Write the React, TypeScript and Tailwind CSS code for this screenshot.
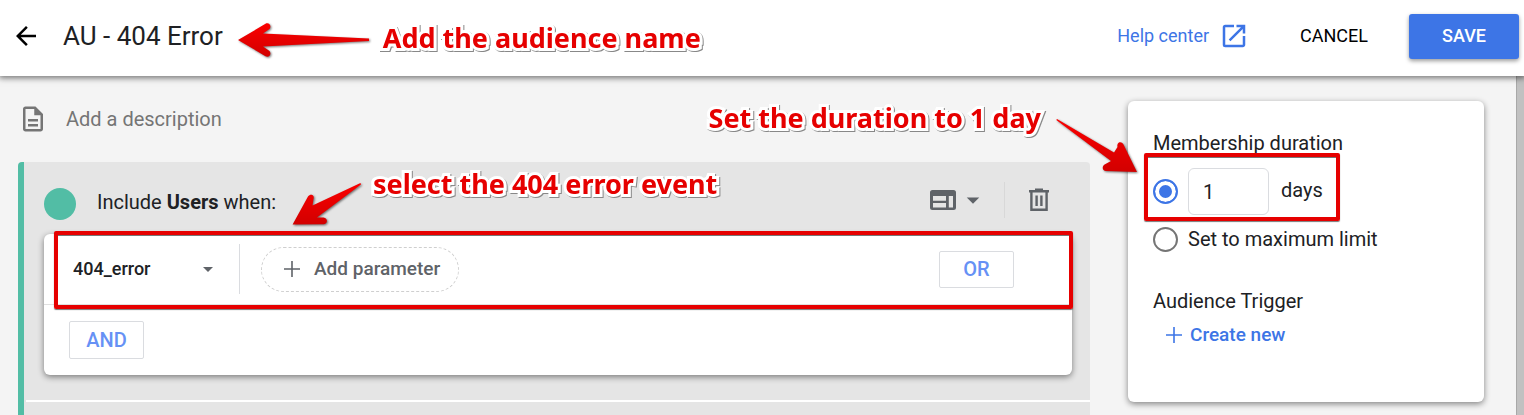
import { useState } from "react";
import type { ReactNode } from "react";
import { MdArrowBack, MdArrowDropDown, MdOpenInNew, MdOutlineDescription } from "react-icons/md";

type CalloutProps = {
    children: ReactNode,
    className?: string
}

type ArrowProps = {
    id: string,
    width: number,
    height: number,
    d: string,
    className?: string
}

const Callout = ({ children, className = "" }: CalloutProps) => (
    <span className={`whitespace-nowrap font-['Noto_Sans','Open_Sans',sans-serif] text-[27px] leading-9 font-bold text-[#e60000] [-webkit-text-stroke:6px_white] [paint-order:stroke_fill] drop-shadow-[1px_1px_0px_#888888] ${className}`}>
        {children}
    </span>
);

const Arrow = ({ id, width, height, d, className = "" }: ArrowProps) => (
    <svg width={width} height={height} viewBox={`0 0 ${width} ${height}`} className={`shrink-0 overflow-visible drop-shadow-[1px_1px_1px_#00000088] ${className}`} aria-hidden="true">
        <defs>
            <linearGradient id={id} x1="0" y1="0" x2="0" y2="1">
                <stop offset="0" stopColor="#fb0000" />
                <stop offset="1" stopColor="#d20000" />
            </linearGradient>
        </defs>
        <path d={d} fill={`url(#${id})`} />
    </svg>
);

const PlusIcon = () => (
    <svg width="16" height="16" viewBox="0 0 16 16" stroke="currentColor" strokeWidth="1.6" aria-hidden="true">
        <path d="M8 0V16M0 8H16" />
    </svg>
);

const ScopeIcon = () => (
    <svg width="26" height="20" viewBox="0 0 26 20" aria-hidden="true">
        <path fill="currentColor" fillRule="evenodd" d="M2.500 0H23.500A2.500 2.500 0 0 1 26 2.500V17.500A2.500 2.500 0 0 1 23.500 20H2.500A2.500 2.500 0 0 1 0 17.500V2.500A2.500 2.500 0 0 1 2.500 0ZM3 6V10.700H16V6ZM3 13V17.500H16V13ZM18.800 6V17.500H23V6Z" />
    </svg>
);

const TrashIcon = () => (
    <svg width="22" height="24" viewBox="0 0 22 24" fill="none" stroke="currentColor" strokeWidth="2.4" aria-hidden="true">
        <path d="M1 3.2H21M7 1.7H15M3.4 3V21.8H18.6V3M8.6 7.5V18M13.4 7.5V18" />
    </svg>
);

const radioStyle = "size-[25px] shrink-0 appearance-none rounded-full border-2 border-[#757575] checked:border-[#3d75e6] checked:bg-[#3d75e6] checked:shadow-[inset_0_0_0_4px_white]";

const Header = () => (
    <header className="relative z-10 flex h-[76px] items-center bg-white pr-[5px] pb-1 pl-[11px] shadow-[0_1px_6px_1px_#00000088]">
        <button type="button" aria-label="Back" className="shrink-0 text-black">
            <MdArrowBack size={30} />
        </button>
        <h1 className="ml-[22px] text-[26px] whitespace-nowrap">AU - 404 Error</h1>
        <Arrow
            id="arrow-name"
            width={131}
            height={34}
            className="mt-2 ml-[15px]"
            d="M0 17 L27.500 .8 C31 -1 34 3 31.500 6 L25 10.500 L131 15.500 V18 L25 23.500 L31.500 28 C34 31 31 35 27.500 33.200 Z"
        />
        <Callout className="mt-1 ml-3.5">Add the audience name</Callout>
        <a href="#help" className="ml-auto flex items-center gap-2.5 text-lg whitespace-nowrap text-[#3d75e6]">
            Help center
            <MdOpenInNew size={30} />
        </a>
        <button type="button" className="ml-[51px] text-lg text-black">CANCEL</button>
        <button type="button" className="ml-[41px] h-[45px] w-[110px] shrink-0 rounded-[3px] bg-[#3d75e6] text-lg font-medium text-white shadow-[0_2px_4px_#00000066]">SAVE</button>
    </header>
);

const ConditionCard = () => (
    <div className="relative mr-[18px] ml-5 rounded-md bg-white shadow-[0_2px_6px_#00000077]">
        <div className="flex h-[71px] items-center border-b border-[#e0e0e0] pl-[29px]">
            <div className="relative flex w-[147px] shrink-0 items-center">
                <select aria-label="Event" className="h-9 w-full appearance-none bg-transparent text-lg font-medium text-[#202124]" defaultValue="404_error">
                    <option value="404_error">404_error</option>
                </select>
                <MdArrowDropDown size={24} className="pointer-events-none absolute right-0 text-[#5f6368]" />
            </div>
            <div className="ml-[19px] h-[50px] w-px bg-[#dadce0]" />
            <button type="button" className="ml-[21px] flex h-[45px] w-[198px] shrink-0 items-center gap-3.5 rounded-full border border-dashed border-[#cfcfcf] pl-[22px] text-[19px] font-medium text-[#5f6368]">
                <PlusIcon />
                Add parameter
            </button>
            <button type="button" className="mr-[58px] ml-auto h-[37px] w-[75px] rounded-xs border border-[#dadce0] text-xl font-medium text-[#6691f5]">OR</button>
        </div>
        <div className="px-[25px] py-4">
            <button type="button" className="block h-[38px] w-[75px] rounded-xs border border-[#dadce0] text-xl font-medium text-[#6691f5]">AND</button>
        </div>
        <div className="pointer-events-none absolute -top-[3px] -right-px left-2.5 h-[78px] rounded-xs border-4 border-[#e60000] shadow-[0_1px_1px_#00000088,inset_0_1px_0_#00000088]" />
    </div>
);

const IncludeUsers = () => (
    <section className="relative flex flex-1 flex-col rounded-t border-l-6 border-[#52bda5] bg-[#e5e5e5]">
        <div className="flex h-[72px] items-center pt-2 pl-5">
            <div className="mt-1 size-8 rounded-full bg-[#52bda5]" />
            <h2 className="ml-[21px] text-xl">Include <b className="font-bold">Users</b> when:</h2>
            <div className="mb-1 ml-auto flex items-center text-[#5f6368]">
                <button type="button" aria-label="Scope" className="flex items-center gap-0.5">
                    <ScopeIcon />
                    <MdArrowDropDown size={30} />
                </button>
                <div className="ml-4 h-9 w-px bg-[#d8d8d8]" />
                <button type="button" aria-label="Delete" className="mr-10 ml-[23px]">
                    <TrashIcon />
                </button>
            </div>
        </div>
        <ConditionCard />
        <div className="mt-[25px] ml-0.5 h-0.5 bg-white" />
        <Arrow
            id="arrow-event"
            width={70}
            height={42}
            className="absolute top-[21px] left-[268px]"
            d="M.6 41.400 L16 13.500 C18.500 10 23 12 21.500 16 L20.500 22.500 L68.500 0 L69 1.500 L25 34.500 L31.500 34.500 C36 35 36 40.500 32 41.200 Z"
        />
        <Callout className="absolute top-1 left-[349px]">select the 404 error event</Callout>
    </section>
);

const MembershipCard = () => {
    const [duration, setDuration] = useState("days");
    const [days, setDays] = useState("1");

    return (
        <aside className="relative mt-[25px] w-[356px] shrink-0 self-start rounded-md bg-white px-[25px] pt-7 pb-[53px] shadow-[0_2px_6px_#00000077]">
            <h2 className="text-xl">Membership duration</h2>
            <div className="mt-[11px] flex h-[47px] items-center">
                <input type="radio" name="duration" aria-label="Number of days" className={radioStyle} checked={duration === "days"} onChange={() => setDuration("days")} />
                <input id="days" type="text" inputMode="numeric" value={days} onChange={(e) => setDays(e.target.value)} className="ml-2.5 h-[47px] w-[81px] rounded-md border border-[#dadce0] px-3.5 text-xl" />
                <label htmlFor="days" className="mb-1 ml-3 text-xl">days</label>
            </div>
            <label className="mt-2.5 flex items-center gap-2.5 text-xl">
                <input type="radio" name="duration" className={radioStyle} checked={duration === "max"} onChange={() => setDuration("max")} />
                Set to maximum limit
            </label>
            <h2 className="mt-[34px] text-xl">Audience Trigger</h2>
            <button type="button" className="mt-1.5 ml-[13px] flex items-center gap-2 text-[19px] leading-7 font-medium text-[#3d75e6]">
                <PlusIcon />
                Create new
            </button>
            <div className="pointer-events-none absolute top-[52px] left-4 h-[68px] w-[196px] rounded-xs border-4 border-[#e60000] shadow-[0_1px_1px_#00000088,inset_0_1px_0_#00000088]" />
            <Callout className="absolute -top-px right-[443px]">Set the duration to 1 day</Callout>
            <Arrow
                id="arrow-duration"
                width={82}
                height={54}
                className="absolute top-[18px] -left-[72px]"
                d="M81 53 L67.500 25.500 C65 21.500 60.500 23.500 61.500 28 L58 33.500 L1 0 L.3 1 L55 42 L49.500 45 C45.500 46.500 46 52 50 52 Z"
            />
        </aside>
    );
};

const App = () => {
    return (
        <div className="flex min-h-screen flex-col overflow-hidden bg-[#f4f4f4] font-[Roboto,sans-serif] text-[#202124]">
            <Header />
            <main className="flex flex-1">
                <div className="ml-[18px] flex flex-1 flex-col">
                    <label className="flex h-[86px] items-center">
                        <MdOutlineDescription size={30} className="text-[#757575]" />
                        <input type="text" placeholder="Add a description" className="ml-[18px] w-80 bg-transparent text-xl placeholder:text-[#757575]" />
                    </label>
                    <IncludeUsers />
                </div>
                <div className="ml-[38px] flex">
                    <MembershipCard />
                    <div className="ml-8 w-2 border-l border-[#a8a8a8] bg-[#c1c1c1]" />
                </div>
            </main>
        </div>
    );
};

export default App;
